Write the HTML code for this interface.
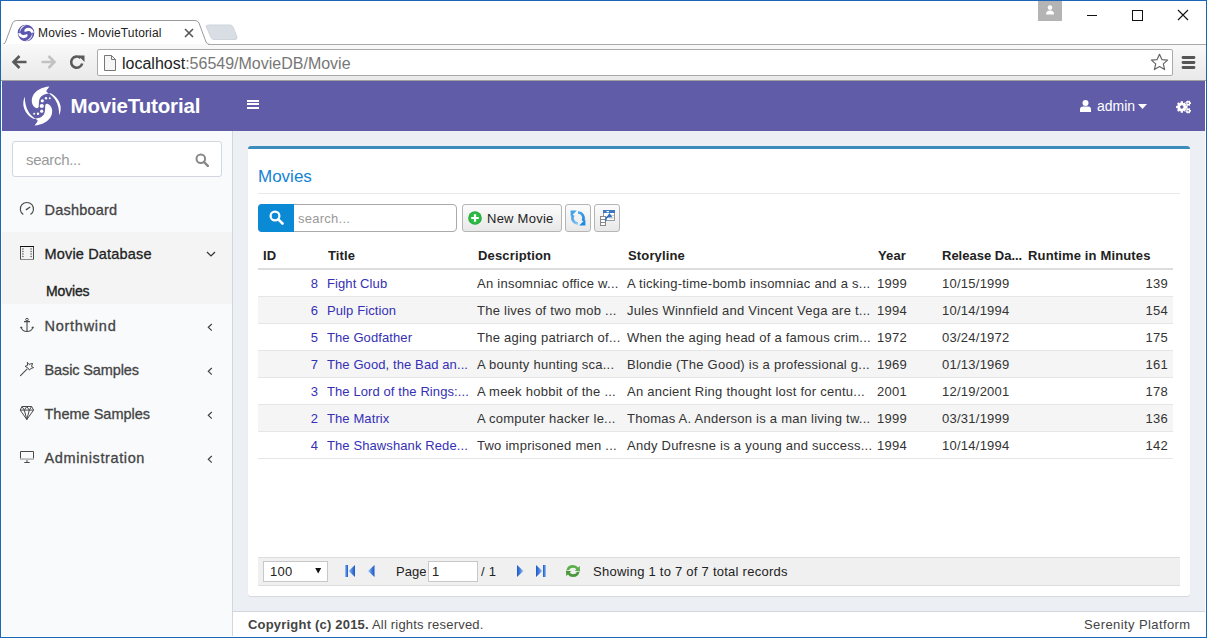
<!DOCTYPE html>
<html><head><meta charset="utf-8">
<style>
*{box-sizing:border-box}
html,body{margin:0;padding:0}
body{width:1207px;height:638px;overflow:hidden;position:relative;background:#fff;font-family:"Liberation Sans",sans-serif;color:#333}
.a{position:absolute}
.t{position:absolute;white-space:nowrap;line-height:1}
svg{position:absolute;display:block}
/* window */
#win{left:0;top:0;width:1207px;height:638px;border:1px solid #1a66b8;z-index:50;pointer-events:none}
#toolbar{left:1px;top:44px;width:1205px;height:37px;background:linear-gradient(#f9f9f9,#e9e9e9)}
#tabline{left:1px;top:44px;width:1205px;height:1px;background:#a9a9a9}
#tbbottom{left:1px;top:80px;width:1205px;height:1px;background:#a0a0a0}
#addr{left:97px;top:49px;width:1076px;height:27px;background:#fff;border:1px solid #a9a9a9;border-radius:2px}
/* viewport */
#vp{left:2px;top:81px;width:1203px;height:555px;background:#ecf0f5;overflow:hidden}
#hdr{left:0;top:0;width:1203px;height:50px;background:#605ca8}
#side{left:0;top:50px;width:230px;height:505px;background:#f9fafc}
#sideb{left:230px;top:50px;width:1px;height:505px;background:#d2d6de}
#box{left:246px;top:65px;width:942px;height:450px;background:#fff;border-top:3px solid #3c8dbc;border-radius:3px;box-shadow:0 1px 1px rgba(0,0,0,.1)}
#foot{left:231px;top:530px;width:972px;height:25px;background:#fff;border-top:1px solid #d2d6de}
.hd{font-size:13px;font-weight:700;color:#222;overflow:hidden;letter-spacing:0.15px}
.cl{font-size:13px;line-height:16px;color:#333;letter-spacing:0.25px;overflow:hidden}
.lk{letter-spacing:0.1px}
.lk{color:#3530b5}
.btn{background:linear-gradient(#fcfcfc,#e8e8e8);border:1px solid #b5b5b5;border-radius:3px}
</style></head>
<body>
<div id="win" class="a"></div>

<!-- tab strip -->
<svg style="left:0;top:18px" width="240" height="28" viewBox="0 0 240 28">
  <path d="M1 26.5 L2 26.5 Q4.5 26.5 5.5 24 L12.5 5 Q13.5 2.5 16.5 2.5 L195 2.5 Q198 2.5 199 5 L206 24 Q207 26.5 210 26.5 L240 26.5" fill="#fff" stroke="#9a9a9a" stroke-width="1"/>
  <path d="M206 8 Q207 7 209 7 L230 7 Q232 7 233 9 L237 19 Q237.5 21.5 235 21.5 L214 21.5 Q212 21.5 211 19.5 Z" fill="#d9dee5" stroke="#cfd4db" stroke-width="1"/>
</svg>

<div id="toolbar" class="a"></div>
<div id="tbbottom" class="a"></div>
<div id="tabline" class="a" style="left:208px;width:998px"></div>
<div id="addr" class="a"></div>
<!-- tab content -->
<svg style="left:17px;top:24px" width="18" height="18" viewBox="0 0 40 40">
  <circle cx="20" cy="20" r="18.5" fill="#5b56b0"/>
  <clipPath id="fvc"><circle cx="20" cy="20" r="17.5"/></clipPath><g clip-path="url(#fvc)"><g fill="#fff" transform="translate(20 20) scale(0.95) rotate(-110) translate(-20 -20)"><use href="#bl"/><use href="#bl" transform="rotate(180 20 20)"/></g></g>
</svg>
<div class="t" style="left:38px;top:27px;font-size:12px;color:#222;letter-spacing:0.15px">Movies - MovieTutorial</div>
<svg style="left:184px;top:28px" width="10" height="10" viewBox="0 0 10 10"><path d="M1 1 L9 9 M9 1 L1 9" stroke="#555" stroke-width="1.6"/></svg>
<!-- window controls -->
<div class="a" style="left:1038px;top:1px;width:24px;height:20px;background:#b4b4b4"></div>
<svg style="left:1045px;top:5px" width="10" height="10" viewBox="0 0 10 10"><circle cx="5" cy="2.6" r="2.3" fill="#fff"/><path d="M1 9.5 Q1 5.6 5 5.6 Q9 5.6 9 9.5 Z" fill="#fff"/></svg>
<div class="a" style="left:1087px;top:15px;width:10px;height:1px;background:#111"></div>
<div class="a" style="left:1132px;top:10px;width:11px;height:11px;border:1px solid #111"></div>
<svg style="left:1177px;top:9px" width="12" height="12" viewBox="0 0 12 12"><path d="M1 1 L11 11 M11 1 L1 11" stroke="#111" stroke-width="1.1"/></svg>
<!-- nav buttons -->
<svg style="left:11px;top:54px" width="17" height="16" viewBox="0 0 17 16"><path d="M15.5 8 H3 M8.5 2 L2.5 8 L8.5 14" fill="none" stroke="#5a5a5a" stroke-width="2.6" stroke-linejoin="miter"/></svg>
<svg style="left:40px;top:54px" width="17" height="16" viewBox="0 0 17 16"><path d="M1.5 8 H14 M8.5 2 L14.5 8 L8.5 14" fill="none" stroke="#c2c2c2" stroke-width="2.6"/></svg>
<svg style="left:69px;top:54px" width="17" height="16" viewBox="0 0 17 16"><path d="M13.2 9.5 A5.6 5.6 0 1 1 11.5 4" fill="none" stroke="#5a5a5a" stroke-width="2.6"/><path d="M9 1.5 L15.5 1.5 L15.5 8 Z" fill="#5a5a5a"/></svg>
<svg style="left:104px;top:55px" width="13" height="16" viewBox="0 0 13 16"><path d="M0.5 0.5 H7.5 L11.5 4.5 V15.5 H0.5 Z" fill="#f6f6f6" stroke="#777" stroke-width="1"/><path d="M7.5 0.5 V4.5 H11.5" fill="none" stroke="#777" stroke-width="1"/></svg>
<div class="t" style="left:122px;top:56px;font-size:16px;color:#222">localhost<span style="color:#777">:56549/MovieDB/Movie</span></div>
<svg style="left:1150px;top:53px" width="19" height="19" viewBox="0 0 19 19"><path d="M9.5 1.3 L11.9 6.6 L17.6 7.1 L13.3 10.9 L14.6 16.6 L9.5 13.6 L4.4 16.6 L5.7 10.9 L1.4 7.1 L7.1 6.6 Z" fill="#fff" stroke="#666" stroke-width="1.2" stroke-linejoin="round"/></svg>
<svg style="left:1181px;top:55px" width="15" height="15" viewBox="0 0 15 15"><path d="M2 2.5 H13 M2 7.5 H13 M2 12.5 H13" stroke="#555" stroke-width="2.8" stroke-linecap="round"/></svg>


<!-- viewport -->
<div id="vp" class="a">
  <div id="hdr" class="a">
    <svg style="left:20px;top:5px" width="40" height="40" viewBox="0 0 40 40">
      <g fill="#fff">
        <path id="bl" d="M27.5 0.6 C20 1.2 13.2 4.6 10.6 10.6 C8.6 15.6 10.4 20.4 14 22 C15.6 22.6 16.7 21.6 16.8 20 C16.9 17.5 16.7 15 17.8 12.2 C19.4 9 23 7.4 28.6 7.2 C33.5 9.5 37.6 14.5 38.6 20.5 C39 24 38.2 27 37.2 29.2 C37.2 24 36.2 18.5 33.4 14 C31.2 10.5 28.2 8 25 6.2 C24.2 5.6 24.2 4.8 24.9 4 C25.6 3 26.5 1.6 27.5 0.6 Z"/>
        <use href="#bl" transform="rotate(180 20 20)"/>
        <circle cx="20.3" cy="14.8" r="1.6"/><circle cx="19.8" cy="20" r="2.1"/><circle cx="19.7" cy="25.2" r="1.6"/>
        <circle cx="24" cy="12.2" r="1.2"/><circle cx="27.8" cy="12.2" r="1"/>
        <circle cx="16" cy="27.8" r="1.2"/><circle cx="12.2" cy="27.8" r="1"/>
      </g>
    </svg>
    <div class="t" style="left:68.5px;top:14.5px;font-size:20.5px;font-weight:700;color:#fff;letter-spacing:-0.15px">MovieTutorial</div>
    <div class="a" style="left:245px;top:19px;width:12px;height:2px;background:#fff"></div>
    <div class="a" style="left:245px;top:22px;width:12px;height:2px;background:#fff"></div>
    <div class="a" style="left:245px;top:26px;width:12px;height:2px;background:#fff"></div>
    <svg style="left:1078px;top:19px" width="11" height="12" viewBox="0 0 11 12"><circle cx="5.5" cy="3" r="3" fill="#fff"/><path d="M0 12 L0 9.5 Q0 6.5 3 6.5 L8 6.5 Q11 6.5 11 9.5 L11 12 Z" fill="#fff"/></svg>
    <div class="t" style="left:1095px;top:18px;font-size:14px;color:#fff">admin</div>
    <svg style="left:1136px;top:23px" width="9" height="5" viewBox="0 0 9 5"><path d="M0 0 L9 0 L4.5 5 Z" fill="#fff"/></svg>
    <svg style="left:1174px;top:19px" width="16" height="15" viewBox="0 0 16 15"><path fill="#fff" fill-rule="evenodd" d="M9.87 5.61 L11.51 5.98 L11.51 8.02 L9.87 8.39 L9.66 8.89 L10.56 10.32 L9.12 11.76 L7.69 10.86 L7.19 11.07 L6.82 12.71 L4.78 12.71 L4.41 11.07 L3.91 10.86 L2.48 11.76 L1.04 10.32 L1.94 8.89 L1.73 8.39 L0.09 8.02 L0.09 5.98 L1.73 5.61 L1.94 5.11 L1.04 3.68 L2.48 2.24 L3.91 3.14 L4.41 2.93 L4.78 1.29 L6.82 1.29 L7.19 2.93 L7.69 3.14 L9.12 2.24 L10.56 3.68 L9.66 5.11 ZM7.50 7.00 A1.7 1.7 0 1 0 4.10 7.00 A1.7 1.7 0 1 0 7.50 7.00 Z M13.99 2.30 L15.00 2.45 L15.00 3.95 L13.99 4.10 L13.87 4.30 L14.25 5.25 L12.95 6.00 L12.32 5.20 L12.08 5.20 L11.45 6.00 L10.15 5.25 L10.53 4.30 L10.41 4.10 L9.40 3.95 L9.40 2.45 L10.41 2.30 L10.53 2.10 L10.15 1.15 L11.45 0.40 L12.08 1.20 L12.32 1.20 L12.95 0.40 L14.25 1.15 L13.87 2.10 ZM13.00 3.20 A0.8 0.8 0 1 0 11.40 3.20 A0.8 0.8 0 1 0 13.00 3.20 Z M13.99 9.90 L15.00 10.05 L15.00 11.55 L13.99 11.70 L13.87 11.90 L14.25 12.85 L12.95 13.60 L12.32 12.80 L12.08 12.80 L11.45 13.60 L10.15 12.85 L10.53 11.90 L10.41 11.70 L9.40 11.55 L9.40 10.05 L10.41 9.90 L10.53 9.70 L10.15 8.75 L11.45 8.00 L12.08 8.80 L12.32 8.80 L12.95 8.00 L14.25 8.75 L13.87 9.70 ZM13.00 10.80 A0.8 0.8 0 1 0 11.40 10.80 A0.8 0.8 0 1 0 13.00 10.80 Z"/></svg>
  </div>
  <div id="side" class="a"></div>
  <div class="a" style="left:10px;top:60px;width:210px;height:36px;background:#fff;border:1px solid #d2d6de;border-radius:3px"></div>
  <div class="t" style="left:24px;top:71px;font-size:15px;letter-spacing:-0.3px;color:#999">search...</div>
  <svg style="left:193px;top:72px" width="14" height="14" viewBox="0 0 14 14"><circle cx="5.8" cy="5.8" r="4.3" fill="none" stroke="#888" stroke-width="2"/><path d="M9 9 L12.8 12.8" stroke="#888" stroke-width="2.4" stroke-linecap="round"/></svg>
  <div class="a" style="left:0;top:151px;width:230px;height:72px;background:#f4f4f5"></div>
  <!-- icons -->
<svg style="left:16px;top:119px" width="18" height="18" viewBox="18 200 18 18"><path d="M23.3 214.6 A6.6 6.6 0 1 1 30.5 214.6" fill="none" stroke="#4a4a4a" stroke-width="1.15"/><path d="M26.3 209.6 L29.8 207.3" stroke="#4a4a4a" stroke-width="1.3" stroke-linecap="round"/></svg>
<svg style="left:16px;top:163px" width="18" height="18" viewBox="18 244 18 18"><rect x="20.5" y="246.5" width="13" height="13" fill="none" stroke="#4a4a4a" stroke-width="1"/><path d="M20 246.5 H34" stroke="#111" stroke-width="1"/><path d="M20 259.5 H34" stroke="#888" stroke-width="1"/><g fill="#4a4a4a"><circle cx="22.9" cy="249" r="0.7"/><circle cx="22.9" cy="251.5" r="0.7"/><circle cx="22.9" cy="254" r="0.7"/><circle cx="22.9" cy="256.5" r="0.7"/><circle cx="31.1" cy="249" r="0.7"/><circle cx="31.1" cy="251.5" r="0.7"/><circle cx="31.1" cy="254" r="0.7"/><circle cx="31.1" cy="256.5" r="0.7"/></g></svg>
<svg style="left:16px;top:235px" width="18" height="18" viewBox="18 316 18 18"><circle cx="27" cy="319.6" r="1.3" fill="none" stroke="#4a4a4a" stroke-width="1"/><path d="M24 321.6 H30 M27 321 V331.6 M21.2 327.6 Q22.5 331.5 27 331.5 Q31.5 331.5 32.8 327.6" fill="none" stroke="#4a4a4a" stroke-width="1.1"/><path d="M19.8 328.3 L21 326.3 L22.8 327.8 Z M34.2 328.3 L33 326.3 L31.2 327.8 Z" fill="#4a4a4a"/></svg>
<svg style="left:16px;top:279px" width="18" height="18" viewBox="18 360 18 18"><path d="M20.5 375.6 L27 369.1" stroke="#4a4a4a" stroke-width="1.1" stroke-linecap="round"/><path d="M27.3 362.3 L29 364.4 L32.6 363.4 L31.5 366.4 L33.6 367.6 L30.6 368.6 L29.5 370.2 L28.1 368.2 L25.1 366.3 L27.6 365.4 Z" fill="none" stroke="#4a4a4a" stroke-width="1" stroke-linejoin="round"/></svg>
<svg style="left:16px;top:323px" width="18" height="18" viewBox="18 404 18 18"><path d="M22 406.5 H31.6 L33.6 410.1 L26.8 419.5 L20.2 410.1 Z M20.2 410.1 H33.6 M22 406.5 L24.3 410.1 L26.8 406.5 L29.3 410.1 L31.6 406.5 M24.3 410.1 L26.8 419.5 L29.3 410.1" fill="none" stroke="#4a4a4a" stroke-width="1" stroke-linejoin="round"/></svg>
<svg style="left:16px;top:367px" width="18" height="18" viewBox="18 448 18 18"><path d="M20.5 451.5 H33.5 V459.5 H20.5 Z" fill="none" stroke="#4a4a4a" stroke-width="1"/><rect x="20" y="458.2" width="14" height="1.8" fill="#bcbcbc"/><path d="M27 460 V462 M24.3 462.5 H29.7" stroke="#4a4a4a" stroke-width="1"/></svg>
  <!-- labels -->
  <div class="t" style="left:42.5px;top:122px;font-size:14.5px;letter-spacing:0.2px;color:#444;-webkit-text-stroke:0.3px #444">Dashboard</div>
  <div class="t" style="left:42.5px;top:166px;font-size:14.5px;letter-spacing:0.17px;color:#222;-webkit-text-stroke:0.3px #222">Movie Database</div>
  <div class="t" style="left:44px;top:202.5px;font-size:14px;letter-spacing:-0.15px;color:#222;-webkit-text-stroke:0.35px #222">Movies</div>
  <div class="t" style="left:42.5px;top:238px;font-size:14.5px;letter-spacing:0.74px;color:#444;-webkit-text-stroke:0.3px #444">Northwind</div>
  <div class="t" style="left:42.5px;top:282px;font-size:14.5px;letter-spacing:-0.12px;color:#444;-webkit-text-stroke:0.3px #444">Basic Samples</div>
  <div class="t" style="left:42.5px;top:326px;font-size:14.5px;letter-spacing:0px;color:#444;-webkit-text-stroke:0.3px #444">Theme Samples</div>
  <div class="t" style="left:42.5px;top:370px;font-size:14.5px;letter-spacing:0.62px;color:#444;-webkit-text-stroke:0.3px #444">Administration</div>
  <svg style="left:204px;top:170px" width="10" height="6" viewBox="0 0 10 6"><path d="M1 1 L5 5 L9 1" fill="none" stroke="#333" stroke-width="1.2"/></svg>
  <svg style="left:205px;top:242px" width="6" height="9" viewBox="0 0 6 9"><path d="M4.8 1 L1.3 4.3 L4.8 7.6" fill="none" stroke="#444" stroke-width="1.2"/></svg>
  <svg style="left:205px;top:286px" width="6" height="9" viewBox="0 0 6 9"><path d="M4.8 1 L1.3 4.3 L4.8 7.6" fill="none" stroke="#444" stroke-width="1.2"/></svg>
  <svg style="left:205px;top:330px" width="6" height="9" viewBox="0 0 6 9"><path d="M4.8 1 L1.3 4.3 L4.8 7.6" fill="none" stroke="#444" stroke-width="1.2"/></svg>
  <svg style="left:205px;top:374px" width="6" height="9" viewBox="0 0 6 9"><path d="M4.8 1 L1.3 4.3 L4.8 7.6" fill="none" stroke="#444" stroke-width="1.2"/></svg>
  <div id="sideb" class="a"></div>
  <div id="box" class="a"></div>
  <div id="foot" class="a"></div>
</div>
<div id="main" class="a" style="left:0;top:0;width:0;height:0">
<div class="t" style="left:258px;top:168px;font-size:17px;color:#1483d3">Movies</div>
<div class="a" style="left:258px;top:193px;width:922px;height:1px;background:#e9e9e9"></div>
<!-- quick search -->
<div class="a" style="left:258px;top:204px;width:199px;height:28px;background:#fff;border:1px solid #aaa;border-radius:4px"></div>
<div class="a" style="left:258px;top:204px;width:36px;height:28px;background:#0a89d5;border-radius:4px 0 0 4px"></div>
<svg style="left:269px;top:210px" width="15" height="15" viewBox="0 0 15 15"><circle cx="6" cy="6" r="4.4" fill="none" stroke="#fff" stroke-width="2.2"/><path d="M9.3 9.3 L13.5 13.5" stroke="#fff" stroke-width="2.6" stroke-linecap="round"/></svg>
<div class="t cl" style="left:298px;top:211px;color:#999">search...</div>
<!-- buttons -->
<div class="a btn" style="left:462px;top:204px;width:100px;height:28px"></div>
<svg style="left:468px;top:211px" width="14" height="14" viewBox="0 0 14 14"><circle cx="7" cy="7" r="6.8" fill="#1fa53a"/><circle cx="7" cy="7" r="6" fill="#2cba45"/><path d="M7 3.2V10.8 M3.2 7H10.8" stroke="#fff" stroke-width="2.2"/></svg>
<div class="t cl" style="left:487px;top:211px;color:#222">New Movie</div>
<div class="a btn" style="left:565px;top:204px;width:26px;height:28px"></div>
<svg style="left:569px;top:209px" width="18" height="18" viewBox="569 209 18 18"><defs><linearGradient id="rg1" x1="0" y1="0" x2="1" y2="1"><stop offset="0" stop-color="#4fb0f0"/><stop offset="1" stop-color="#1f7fd8"/></linearGradient><linearGradient id="rg2" x1="1" y1="1" x2="0" y2="0"><stop offset="0" stop-color="#8fcdf5"/><stop offset="1" stop-color="#3d95dc"/></linearGradient></defs>
<path d="M578 211.2 A6.8 6.8 0 0 1 583.8 221.6 L581.6 220.2 A4.2 4.2 0 0 0 578 213.8 Z" fill="url(#rg1)"/>
<path d="M585.4 225.4 L579.2 225.4 L585.4 219.2 Z" fill="#1d8be6"/>
<path d="M578 224.8 A6.8 6.8 0 0 1 572.2 214.4 L574.4 215.8 A4.2 4.2 0 0 0 578 222.2 Z" fill="url(#rg2)"/>
<path d="M570.6 210.6 L576.8 210.6 L570.6 216.8 Z" fill="#3ea3ea"/></svg>
<div class="a btn" style="left:594px;top:204px;width:26px;height:28px"></div>
<svg style="left:598px;top:208px" width="19" height="20" viewBox="598 208 19 20"><rect x="603.5" y="210.5" width="11" height="10" fill="#fff" stroke="#9a9a9a" stroke-width="1"/><rect x="603" y="210" width="12" height="3" fill="#3b78c0"/><rect x="606.5" y="211" width="2.5" height="1.2" fill="#fff"/><path d="M609 215.5 H614 M609 218 H614" stroke="#c8c8c8" stroke-width="1"/><rect x="600.5" y="216.5" width="5" height="9" fill="#fff" stroke="#888" stroke-width="1"/><path d="M600.5 219.5 H605.5 M600.5 222.5 H605.5" stroke="#888" stroke-width="1"/><path d="M605.6 221 Q605.6 217.2 608.8 216.2" fill="none" stroke="#2f6fc0" stroke-width="1.5"/><path d="M609.4 213 L612.4 217.2 L606.6 217.4 Z" fill="#2f6fc0"/></svg>
<div class="t hd" style="left:263px;top:249px;width:60px">ID</div>
<div class="t hd" style="left:328px;top:249px;width:145px">Title</div>
<div class="t hd" style="left:478px;top:249px;width:145px">Description</div>
<div class="t hd" style="left:628px;top:249px;width:245px">Storyline</div>
<div class="t hd" style="left:878px;top:249px;width:60px">Year</div>
<div class="t hd" style="left:942px;top:249px;width:82px;letter-spacing:0;overflow:visible">Release Da...</div>
<div class="t hd" style="left:1028px;top:249px;width:145px">Runtime in Minutes</div>
<div class="a" style="left:258px;top:268px;width:915px;height:2px;background:#ddd"></div>
<div class="a" style="left:258px;top:296px;width:915px;height:1px;background:#e6e6e6"></div>
<div class="t cl lk" style="left:258px;top:276px;width:60px;text-align:right">8</div>
<div class="t cl lk" style="left:327px;top:276px;width:146px">Fight Club</div>
<div class="t cl" style="left:477px;top:276px;width:146px">An insomniac office w...</div>
<div class="t cl" style="left:627px;top:276px;width:246px">A ticking-time-bomb insomniac and a s...</div>
<div class="t cl" style="left:877px;top:276px;width:61px">1999</div>
<div class="t cl" style="left:942px;top:276px;width:81px">10/15/1999</div>
<div class="t cl" style="left:1023px;top:276px;width:145px;text-align:right">139</div>
<div class="a" style="left:258px;top:297px;width:915px;height:26px;background:#f5f5f5"></div>
<div class="a" style="left:258px;top:323px;width:915px;height:1px;background:#e6e6e6"></div>
<div class="t cl lk" style="left:258px;top:303px;width:60px;text-align:right">6</div>
<div class="t cl lk" style="left:327px;top:303px;width:146px">Pulp Fiction</div>
<div class="t cl" style="left:477px;top:303px;width:146px">The lives of two mob ...</div>
<div class="t cl" style="left:627px;top:303px;width:246px">Jules Winnfield and Vincent Vega are t...</div>
<div class="t cl" style="left:877px;top:303px;width:61px">1994</div>
<div class="t cl" style="left:942px;top:303px;width:81px">10/14/1994</div>
<div class="t cl" style="left:1023px;top:303px;width:145px;text-align:right">154</div>
<div class="a" style="left:258px;top:350px;width:915px;height:1px;background:#e6e6e6"></div>
<div class="t cl lk" style="left:258px;top:330px;width:60px;text-align:right">5</div>
<div class="t cl lk" style="left:327px;top:330px;width:146px">The Godfather</div>
<div class="t cl" style="left:477px;top:330px;width:146px">The aging patriarch of...</div>
<div class="t cl" style="left:627px;top:330px;width:246px">When the aging head of a famous crim...</div>
<div class="t cl" style="left:877px;top:330px;width:61px">1972</div>
<div class="t cl" style="left:942px;top:330px;width:81px">03/24/1972</div>
<div class="t cl" style="left:1023px;top:330px;width:145px;text-align:right">175</div>
<div class="a" style="left:258px;top:351px;width:915px;height:26px;background:#f5f5f5"></div>
<div class="a" style="left:258px;top:377px;width:915px;height:1px;background:#e6e6e6"></div>
<div class="t cl lk" style="left:258px;top:357px;width:60px;text-align:right">7</div>
<div class="t cl lk" style="left:327px;top:357px;width:146px">The Good, the Bad an...</div>
<div class="t cl" style="left:477px;top:357px;width:146px">A bounty hunting sca...</div>
<div class="t cl" style="left:627px;top:357px;width:246px">Blondie (The Good) is a professional g...</div>
<div class="t cl" style="left:877px;top:357px;width:61px">1969</div>
<div class="t cl" style="left:942px;top:357px;width:81px">01/13/1969</div>
<div class="t cl" style="left:1023px;top:357px;width:145px;text-align:right">161</div>
<div class="a" style="left:258px;top:404px;width:915px;height:1px;background:#e6e6e6"></div>
<div class="t cl lk" style="left:258px;top:384px;width:60px;text-align:right">3</div>
<div class="t cl lk" style="left:327px;top:384px;width:146px">The Lord of the Rings:...</div>
<div class="t cl" style="left:477px;top:384px;width:146px">A meek hobbit of the ...</div>
<div class="t cl" style="left:627px;top:384px;width:246px">An ancient Ring thought lost for centu...</div>
<div class="t cl" style="left:877px;top:384px;width:61px">2001</div>
<div class="t cl" style="left:942px;top:384px;width:81px">12/19/2001</div>
<div class="t cl" style="left:1023px;top:384px;width:145px;text-align:right">178</div>
<div class="a" style="left:258px;top:405px;width:915px;height:26px;background:#f5f5f5"></div>
<div class="a" style="left:258px;top:431px;width:915px;height:1px;background:#e6e6e6"></div>
<div class="t cl lk" style="left:258px;top:411px;width:60px;text-align:right">2</div>
<div class="t cl lk" style="left:327px;top:411px;width:146px">The Matrix</div>
<div class="t cl" style="left:477px;top:411px;width:146px">A computer hacker le...</div>
<div class="t cl" style="left:627px;top:411px;width:246px">Thomas A. Anderson is a man living tw...</div>
<div class="t cl" style="left:877px;top:411px;width:61px">1999</div>
<div class="t cl" style="left:942px;top:411px;width:81px">03/31/1999</div>
<div class="t cl" style="left:1023px;top:411px;width:145px;text-align:right">136</div>
<div class="a" style="left:258px;top:458px;width:915px;height:1px;background:#e6e6e6"></div>
<div class="t cl lk" style="left:258px;top:438px;width:60px;text-align:right">4</div>
<div class="t cl lk" style="left:327px;top:438px;width:146px">The Shawshank Rede...</div>
<div class="t cl" style="left:477px;top:438px;width:146px">Two imprisoned men ...</div>
<div class="t cl" style="left:627px;top:438px;width:246px">Andy Dufresne is a young and success...</div>
<div class="t cl" style="left:877px;top:438px;width:61px">1994</div>
<div class="t cl" style="left:942px;top:438px;width:81px">10/14/1994</div>
<div class="t cl" style="left:1023px;top:438px;width:145px;text-align:right">142</div>
<!-- pager -->
<svg style="left:0;top:0" width="0" height="0"><defs><linearGradient id="pg" x1="0" y1="0" x2="1" y2="0"><stop offset="0" stop-color="#a8ccf6"/><stop offset="0.5" stop-color="#4a86e0"/><stop offset="1" stop-color="#1f55c4"/></linearGradient><linearGradient id="pgr" x1="1" y1="0" x2="0" y2="0"><stop offset="0" stop-color="#a8ccf6"/><stop offset="0.5" stop-color="#4a86e0"/><stop offset="1" stop-color="#1f55c4"/></linearGradient></defs></svg>
<div class="a" style="left:258px;top:557px;width:922px;height:29px;background:#f0f0f0;border-top:1px solid #ddd;border-bottom:1px solid #ddd"></div>
<div class="a" style="left:263px;top:561px;width:65px;height:21px;background:#fff;border:1px solid #c8c8c8"></div>
<div class="t cl" style="left:270px;top:564px;color:#222">100</div>
<svg style="left:315px;top:567px" width="7" height="7" viewBox="0 0 7 7"><path d="M0.2 1 H6.2 L3.2 6.6 Z" fill="#111"/></svg>
<svg style="left:344px;top:564px" width="12" height="14" viewBox="0 0 12 14"><rect x="1" y="1" width="3" height="12" fill="url(#pg)"/><path d="M11 1 L4.6 7 L11 13 Z" fill="url(#pg)"/></svg>
<svg style="left:367px;top:564px" width="9" height="14" viewBox="0 0 9 14"><path d="M7.5 1 L1 7 L7.5 13 Z" fill="url(#pg)"/></svg>
<div class="t cl" style="left:396px;top:564px;color:#222;letter-spacing:0">Page</div>
<div class="a" style="left:428px;top:561px;width:50px;height:21px;background:#fff;border:1px solid #c8c8c8"></div>
<div class="t cl" style="left:432px;top:564px;color:#222">1</div>
<div class="t cl" style="left:481px;top:564px;color:#222">/ 1</div>
<svg style="left:516px;top:564px" width="9" height="14" viewBox="0 0 9 14"><path d="M1 1 L7.5 7 L1 13 Z" fill="url(#pgr)"/></svg>
<svg style="left:535px;top:564px" width="12" height="14" viewBox="0 0 12 14"><path d="M1 1 L7.4 7 L1 13 Z" fill="url(#pgr)"/><rect x="8" y="1" width="3" height="12" fill="url(#pgr)"/></svg>
<svg style="left:564px;top:563px" width="18" height="16" viewBox="0 0 18 16"><path d="M2.5 7 Q3.5 2 9 2 Q12.5 2 14 4.5 L15.8 3 L16 8.5 L10.8 7.8 L12.3 6.2 Q11 4.8 9 4.8 Q6 4.8 5.2 7 Z" fill="#5bae4c"/><path d="M15.5 9 Q14.5 14 9 14 Q5.5 14 4 11.5 L2.2 13 L2 7.5 L7.2 8.2 L5.7 9.8 Q7 11.2 9 11.2 Q12 11.2 12.8 9 Z" fill="#4a9a3c"/></svg>
<div class="t cl" style="left:593px;top:564px;color:#222">Showing 1 to 7 of 7 total records</div>
<!-- footer text -->
<div class="t cl" style="left:248px;top:617px;color:#444;letter-spacing:0.2px"><b>Copyright (c) 2015.</b> All rights reserved.</div>
<div class="t cl" style="left:1084px;top:617px;color:#444;letter-spacing:0.4px">Serenity Platform</div>
</div>
</body></html>
